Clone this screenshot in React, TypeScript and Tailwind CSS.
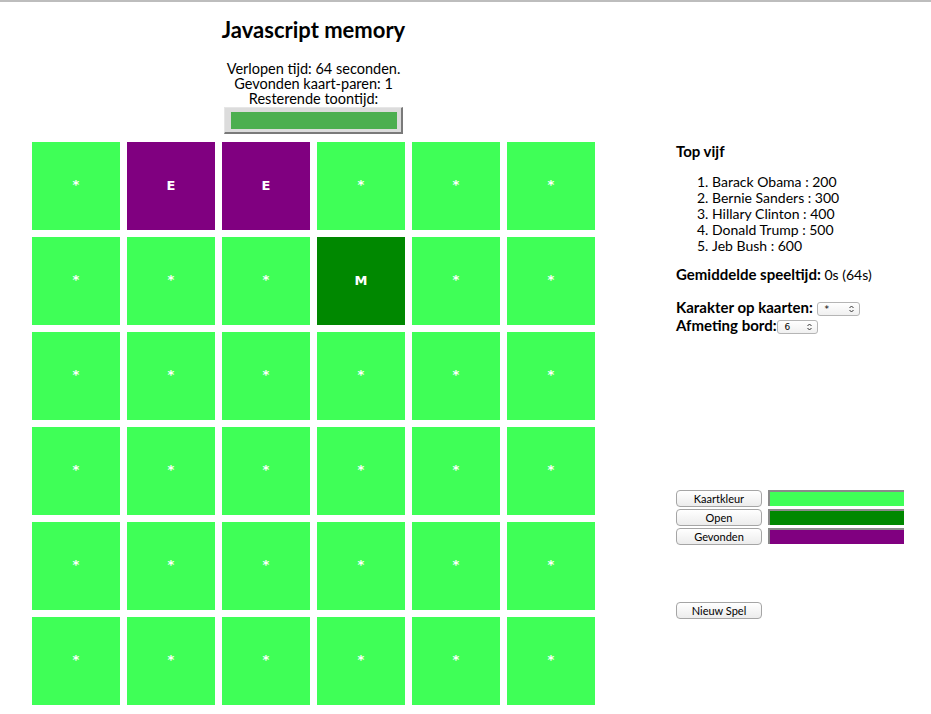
import React from "react";

const N = 6;
const cards: { ch: string; bg: string }[] = Array.from({ length: N * N }, (_, i) => {
  if (i === 1 || i === 2) return { ch: "E", bg: "bg-[#800080]" };
  if (i === 9) return { ch: "M", bg: "bg-[#008800]" };
  return { ch: "*", bg: "bg-[#3fff57]" };
});

function MacButton({ label }: { label: string }) {
  return (
    <button className="w-[86px] h-[17px] rounded-[4px] border border-[#a5a5a5] bg-gradient-to-b from-white to-[#ececec] text-[11px] leading-[15px] text-black font-['Lato',sans-serif]">
      {label}
    </button>
  );
}

function FakeSelect({ value, width }: { value: string; width: string }) {
  return (
    <span
      className={`inline-flex items-center justify-between h-[14px] ${width} rounded-[3px] border border-[#b5b5b5] bg-gradient-to-b from-white to-[#f0f0f0] pl-[7px] pr-[5px] align-middle`}
    >
      <span className="text-[9px] leading-[11px] font-normal font-['DejaVu_Sans',sans-serif]">{value}</span>
      <svg width="5" height="8" viewBox="0 0 5 8">
        <path d="M0.5 3 L2.5 1 L4.5 3" fill="none" stroke="#333" strokeWidth="1" />
        <path d="M0.5 5 L2.5 7 L4.5 5" fill="none" stroke="#333" strokeWidth="1" />
      </svg>
    </span>
  );
}

export default function App() {
  return (
    <div className="min-h-screen bg-white border-t-2 border-[#bdbdbd] text-black font-['Lato',sans-serif]">
      <div className="flex pl-[32px]">
        <div className="w-[563px] flex flex-col items-center">
          <h1 className="mt-[14px] text-[22px] leading-[28px] font-bold">Javascript memory</h1>
          <div className="mt-[17px] text-center text-[14.5px] leading-[15px]">
            <div>Verlopen tijd: 64 seconden.</div>
            <div>Gevonden kaart-paren: 1</div>
            <div>Resterende toontijd:</div>
          </div>
          <div className="mt-[1px] w-[179px] h-[27px] bg-[#dcdcdc] border border-t-[#e6e6e6] border-l-[#e6e6e6] border-r-[#7a7a7a] border-b-[#7a7a7a] border-r-2 border-b-2 pl-[6px] pr-[4px] pt-[4px] pb-[3px]">
            <div className="w-full h-full bg-[#4caf50]" />
          </div>
          <div className="mt-[8px] grid grid-cols-6 gap-[7px] w-[563px]">
            {cards.map((c, i) => (
              <div
                key={i}
                className={`h-[88px] ${c.bg} flex items-center justify-center text-white font-bold text-[13px] font-['DejaVu_Sans',sans-serif]`}
              >
                <span className={c.ch === "*" ? "-mt-[3px]" : ""}>{c.ch}</span>
              </div>
            ))}
          </div>
        </div>
        <div className="ml-[81px] pt-[141px] text-[14px] leading-[16px] w-[240px]">
          <div className="font-bold text-[15px]">Top vijf</div>
          <ol className="list-decimal pl-[36px] mt-[15px]">
            <li>Barack Obama : 200</li>
            <li>Bernie Sanders : 300</li>
            <li>Hillary Clinton : 400</li>
            <li>Donald Trump : 500</li>
            <li>Jeb Bush : 600</li>
          </ol>
          <div className="mt-[12px]">
            <span className="font-bold text-[15px]">Gemiddelde speeltijd:</span> 0s (64s)
          </div>
          <div className="mt-[15px] font-bold text-[15px] leading-[18px]">
            Karakter op kaarten: <FakeSelect value="*" width="w-[43px]" />
          </div>
          <div className="font-bold text-[15px] leading-[18px]">
            Afmeting bord:<FakeSelect value="6" width="w-[41px]" />
          </div>
          <div className="mt-[156px] flex flex-col gap-[2px]">
            {[
              ["Kaartkleur", "bg-[#3fff57]"],
              ["Open", "bg-[#008800]"],
              ["Gevonden", "bg-[#800080]"],
            ].map(([l, bg]) => (
              <div key={l} className="flex items-start gap-[6px]">
                <MacButton label={l} />
                <div className={`w-[136px] h-[16px] ${bg} border-t-2 border-l-2 border-[#8a8a8a]`} />
              </div>
            ))}
          </div>
          <div className="mt-[57px]">
            <MacButton label="Nieuw Spel" />
          </div>
        </div>
      </div>
    </div>
  );
}
